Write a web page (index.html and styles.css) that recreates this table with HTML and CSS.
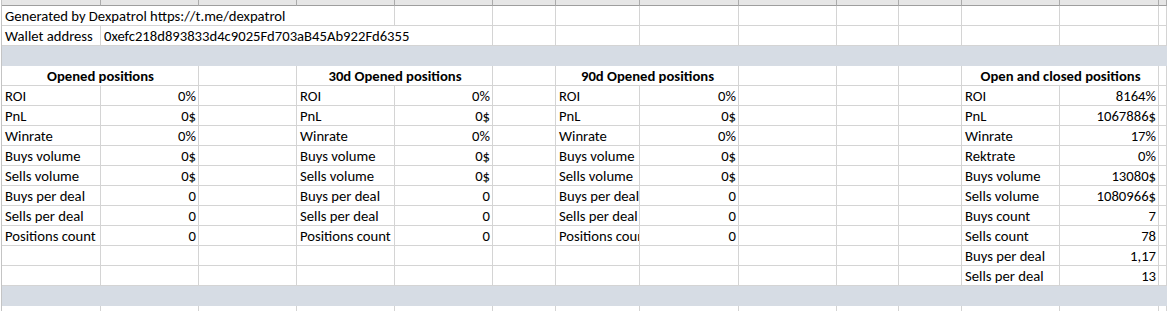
FILE: index.html
```html
<!DOCTYPE html>
<html>
<head>
<meta charset="utf-8">
<link rel="stylesheet" href="styles.css">
</head>
<body>
<div class="sheet">
  <div class="ch"></div><div class="ch"></div><div class="ch"></div><div class="ch"></div><div class="ch"></div><div class="ch"></div><div class="ch"></div><div class="ch"></div><div class="ch"></div><div class="ch"></div><div class="ch"></div><div class="ch"></div><div class="ch"></div><div class="ch"></div>

  <div class="c span4">Generated by Dexpatrol https://t.me/dexpatrol</div><div class="c"></div><div class="c"></div><div class="c"></div><div class="c"></div><div class="c"></div><div class="c"></div><div class="c"></div><div class="c"></div><div class="c"></div><div class="c"></div>

  <div class="c">Wallet address</div><div class="c span4">0xefc218d893833d4c9025Fd703aB45Ab922Fd6355</div><div class="c"></div><div class="c"></div><div class="c"></div><div class="c"></div><div class="c"></div><div class="c"></div><div class="c"></div><div class="c"></div><div class="c"></div>

  <div class="band"></div>

  <div class="c h span2">Opened positions</div><div class="c"></div><div class="c h span2">30d Opened positions</div><div class="c"></div><div class="c h span2">90d Opened positions</div><div class="c"></div><div class="c"></div><div class="c"></div><div class="c h span2">Open and closed positions</div><div class="c"></div>

  <div class="c">ROI</div><div class="c r">0%</div><div class="c"></div><div class="c">ROI</div><div class="c r">0%</div><div class="c"></div><div class="c">ROI</div><div class="c r">0%</div><div class="c"></div><div class="c"></div><div class="c"></div><div class="c">ROI</div><div class="c r">8164%</div><div class="c"></div>

  <div class="c">PnL</div><div class="c r">0$</div><div class="c"></div><div class="c">PnL</div><div class="c r">0$</div><div class="c"></div><div class="c">PnL</div><div class="c r">0$</div><div class="c"></div><div class="c"></div><div class="c"></div><div class="c">PnL</div><div class="c r">1067886$</div><div class="c"></div>

  <div class="c">Winrate</div><div class="c r">0%</div><div class="c"></div><div class="c">Winrate</div><div class="c r">0%</div><div class="c"></div><div class="c">Winrate</div><div class="c r">0%</div><div class="c"></div><div class="c"></div><div class="c"></div><div class="c">Winrate</div><div class="c r">17%</div><div class="c"></div>

  <div class="c">Buys volume</div><div class="c r">0$</div><div class="c"></div><div class="c">Buys volume</div><div class="c r">0$</div><div class="c"></div><div class="c">Buys volume</div><div class="c r">0$</div><div class="c"></div><div class="c"></div><div class="c"></div><div class="c">Rektrate</div><div class="c r">0%</div><div class="c"></div>

  <div class="c">Sells volume</div><div class="c r">0$</div><div class="c"></div><div class="c">Sells volume</div><div class="c r">0$</div><div class="c"></div><div class="c">Sells volume</div><div class="c r">0$</div><div class="c"></div><div class="c"></div><div class="c"></div><div class="c">Buys volume</div><div class="c r">13080$</div><div class="c"></div>

  <div class="c">Buys per deal</div><div class="c r">0</div><div class="c"></div><div class="c">Buys per deal</div><div class="c r">0</div><div class="c"></div><div class="c">Buys per deal</div><div class="c r">0</div><div class="c"></div><div class="c"></div><div class="c"></div><div class="c">Sells volume</div><div class="c r">1080966$</div><div class="c"></div>

  <div class="c">Sells per deal</div><div class="c r">0</div><div class="c"></div><div class="c">Sells per deal</div><div class="c r">0</div><div class="c"></div><div class="c">Sells per deal</div><div class="c r">0</div><div class="c"></div><div class="c"></div><div class="c"></div><div class="c">Buys count</div><div class="c r">7</div><div class="c"></div>

  <div class="c">Positions count</div><div class="c r">0</div><div class="c"></div><div class="c">Positions count</div><div class="c r">0</div><div class="c"></div><div class="c">Positions count</div><div class="c r">0</div><div class="c"></div><div class="c"></div><div class="c"></div><div class="c">Sells count</div><div class="c r">78</div><div class="c"></div>

  <div class="c"></div><div class="c"></div><div class="c"></div><div class="c"></div><div class="c"></div><div class="c"></div><div class="c"></div><div class="c"></div><div class="c"></div><div class="c"></div><div class="c"></div><div class="c">Buys per deal</div><div class="c r">1,17</div><div class="c"></div>

  <div class="c"></div><div class="c"></div><div class="c"></div><div class="c"></div><div class="c"></div><div class="c"></div><div class="c"></div><div class="c"></div><div class="c"></div><div class="c"></div><div class="c"></div><div class="c">Sells per deal</div><div class="c r">13</div><div class="c"></div>

  <div class="band"></div>

  <div class="c"></div><div class="c"></div><div class="c"></div><div class="c"></div><div class="c"></div><div class="c"></div><div class="c"></div><div class="c"></div><div class="c"></div><div class="c"></div><div class="c"></div><div class="c"></div><div class="c"></div><div class="c"></div>
</div>
</body>
</html>
```

FILE: styles.css
```css
html, body {
  margin: 0;
  padding: 0;
  background: #ffffff;
  overflow: hidden;
}

.sheet {
  display: grid;
  grid-template-columns: 99px 98px 98px 98px 98px 63px 84px 99px 98px 62px 63px 98px 99px 1fr;
  grid-template-rows: 6px;
  grid-auto-rows: 20px;
  margin-left: 1px;
  border-left: 1px solid #c4c4c4;
  font-family: Carlito, Calibri, Lato, "Liberation Sans", sans-serif;
  font-size: 14.67px;
  color: #000000;
}

.ch {
  background: #e6e6e6;
  border-right: 1px solid #ababab;
  border-bottom: 1px solid #9e9e9e;
}

.c {
  border-right: 1px solid #d4d4d4;
  border-bottom: 1px solid #d4d4d4;
  padding: 0 2px 0 3px;
  white-space: nowrap;
  overflow: hidden;
  display: flex;
  align-items: flex-end;
  line-height: 18px;
  min-width: 0;
}

.c.r {
  justify-content: flex-end;
}

.c.h {
  justify-content: center;
  font-weight: bold;
}

.span2 {
  grid-column: span 2;
}

.span4 {
  grid-column: span 4;
}

.band {
  grid-column: 1 / -1;
  background: #d6dce4;
}
```
